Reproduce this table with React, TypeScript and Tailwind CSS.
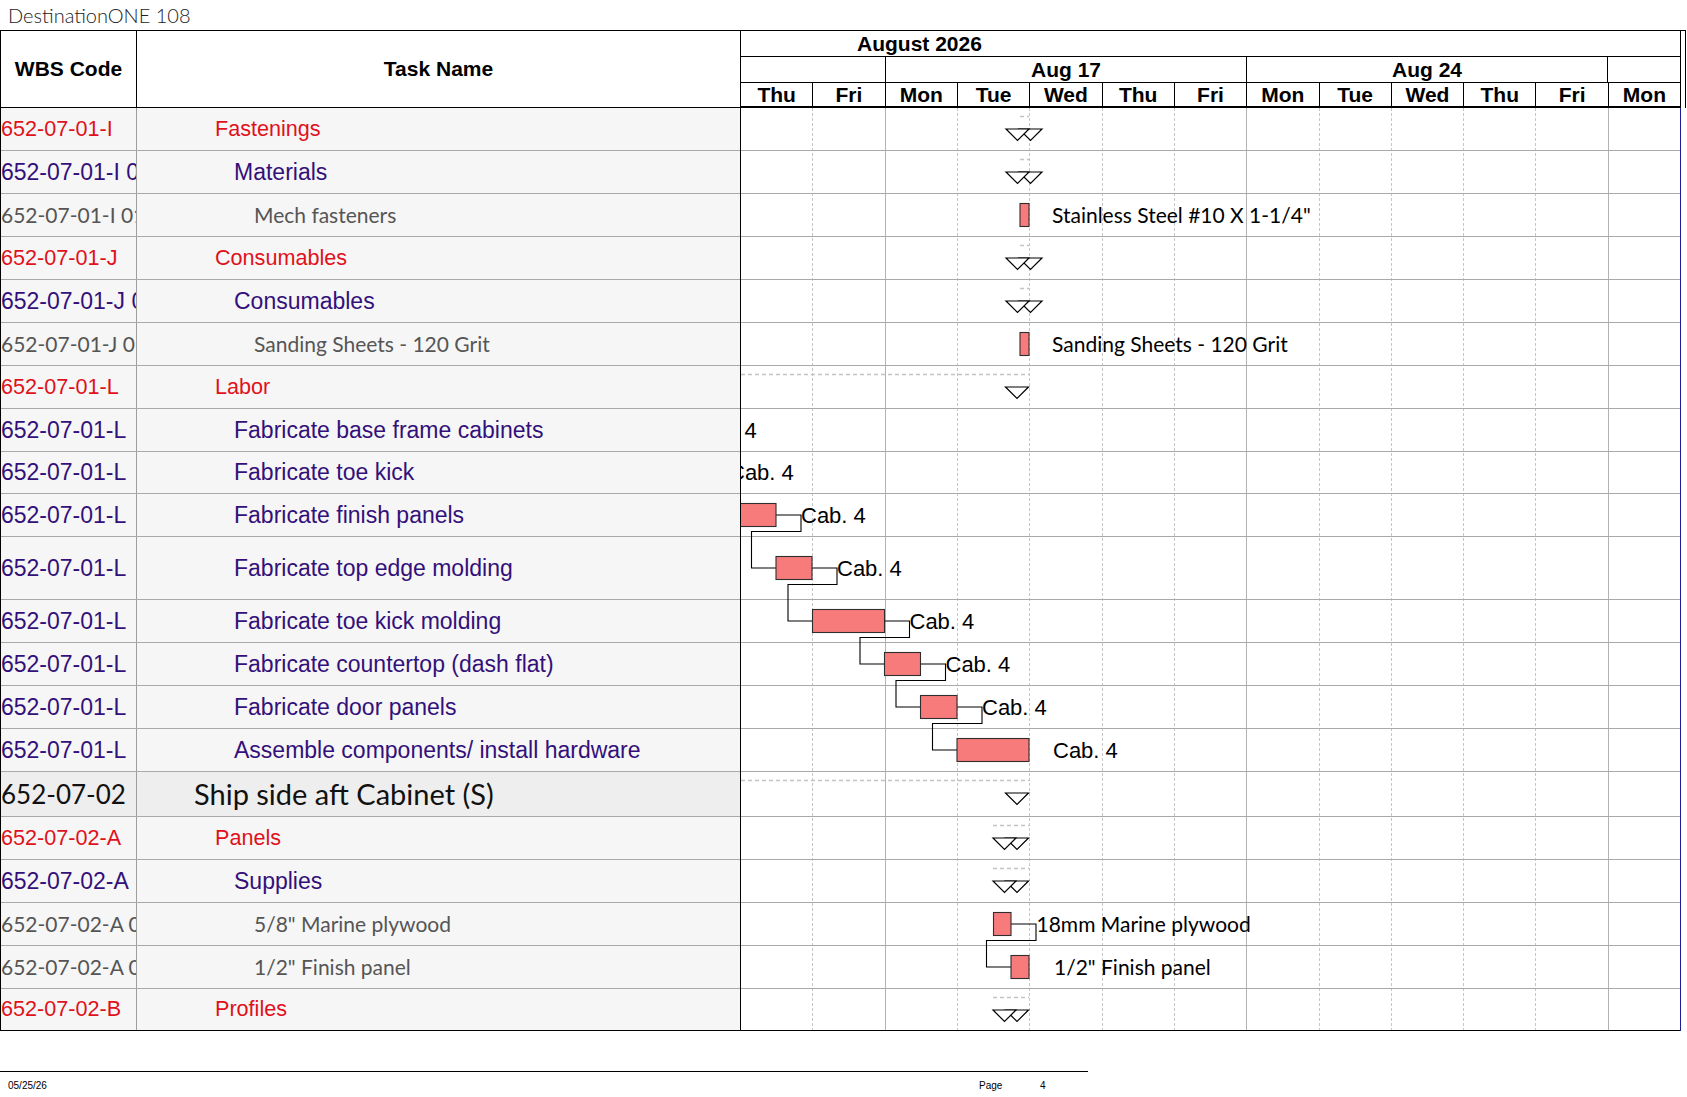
import React from 'react'

type Kind = 'red' | 'purple' | 'gray' | 'top'

type Row = {
  code: string
  name: string
  kind: Kind
  h: number
  label?: { x: number; text: string; cab?: boolean }
}

const rows: Row[] = [
  { code: '652-07-01-I', name: 'Fastenings', kind: 'red', h: 43 },
  { code: '652-07-01-I 01', name: 'Materials', kind: 'purple', h: 43 },
  { code: '652-07-01-I 01 01', name: 'Mech fasteners', kind: 'gray', h: 43, label: { x: 1052, text: 'Stainless Steel #10 X 1-1/4"' } },
  { code: '652-07-01-J', name: 'Consumables', kind: 'red', h: 43 },
  { code: '652-07-01-J 01', name: 'Consumables', kind: 'purple', h: 43 },
  { code: '652-07-01-J 01 01', name: 'Sanding Sheets - 120 Grit', kind: 'gray', h: 43, label: { x: 1052, text: 'Sanding Sheets - 120 Grit' } },
  { code: '652-07-01-L', name: 'Labor', kind: 'red', h: 43 },
  { code: '652-07-01-L', name: 'Fabricate base frame cabinets', kind: 'purple', h: 43, label: { x: 692, text: 'Cab. 4', cab: true } },
  { code: '652-07-01-L', name: 'Fabricate toe kick', kind: 'purple', h: 42, label: { x: 729, text: 'Cab. 4', cab: true } },
  { code: '652-07-01-L', name: 'Fabricate finish panels', kind: 'purple', h: 43, label: { x: 801, text: 'Cab. 4', cab: true } },
  { code: '652-07-01-L', name: 'Fabricate top edge molding', kind: 'purple', h: 63, label: { x: 837, text: 'Cab. 4', cab: true } },
  { code: '652-07-01-L', name: 'Fabricate toe kick molding', kind: 'purple', h: 43, label: { x: 909.5, text: 'Cab. 4', cab: true } },
  { code: '652-07-01-L', name: 'Fabricate countertop (dash flat)', kind: 'purple', h: 43, label: { x: 945.5, text: 'Cab. 4', cab: true } },
  { code: '652-07-01-L', name: 'Fabricate door panels', kind: 'purple', h: 43, label: { x: 982, text: 'Cab. 4', cab: true } },
  { code: '652-07-01-L', name: 'Assemble components/ install hardware', kind: 'purple', h: 43, label: { x: 1053, text: 'Cab. 4', cab: true } },
  { code: '652-07-02', name: 'Ship side aft Cabinet (S)', kind: 'top', h: 45 },
  { code: '652-07-02-A', name: 'Panels', kind: 'red', h: 43 },
  { code: '652-07-02-A', name: 'Supplies', kind: 'purple', h: 43 },
  { code: '652-07-02-A 01 01', name: '5/8" Marine plywood', kind: 'gray', h: 43, label: { x: 1036.5, text: '18mm Marine plywood' } },
  { code: '652-07-02-A 01 02', name: '1/2" Finish panel', kind: 'gray', h: 43, label: { x: 1054, text: '1/2" Finish panel' } },
  { code: '652-07-02-B', name: 'Profiles', kind: 'red', h: 42 },
]

const heights: Record<number, string> = {
  42: 'h-[42px]',
  43: 'h-[43px]',
  45: 'h-[45px]',
  63: 'h-[63px]',
}

const codeStyle: Record<Kind, string> = {
  red: "font-['Liberation_Sans',Arial,sans-serif] text-[21.6px] text-[#e0111b]",
  purple: "font-['Liberation_Sans',Arial,sans-serif] text-[23px] text-[#33107a]",
  gray: "font-['Lato',sans-serif] text-[21px] text-[#555555]",
  top: "font-['Lato',sans-serif] text-[26px] text-[#111111]",
}

const nameStyle: Record<Kind, string> = {
  red: "pl-[78px] font-['Liberation_Sans',Arial,sans-serif] text-[21.6px] text-[#e0111b]",
  purple: "pl-[97px] font-['Liberation_Sans',Arial,sans-serif] text-[23px] text-[#33107a]",
  gray: "pl-[117px] font-['Lato',sans-serif] text-[21px] text-[#555555]",
  top: "pl-[57px] font-['Lato',sans-serif] text-[29px] text-[#111111]",
}

// page y of each row top, body starts under the header at y=108
const tops: number[] = []
rows.forEach((r, i) => tops.push(i === 0 ? 108 : tops[i - 1] + rows[i - 1].h))
const mid = (i: number) => tops[i] + (rows[i].h - 1) / 2

const bars = [
  { row: 2, x1: 1020, x2: 1029 },
  { row: 5, x1: 1020, x2: 1029 },
  { row: 9, x1: 700, x2: 776 },
  { row: 10, x1: 776, x2: 812 },
  { row: 11, x1: 812.5, x2: 884.5 },
  { row: 12, x1: 884.5, x2: 920.5 },
  { row: 13, x1: 920.5, x2: 957 },
  { row: 14, x1: 957, x2: 1029 },
  { row: 18, x1: 993.5, x2: 1011 },
  { row: 19, x1: 1011, x2: 1029 },
]

const summaries = [
  { row: 0, tris: [1030.5, 1017.5], line: [1020, 1029] },
  { row: 1, tris: [1030.5, 1017.5], line: [1020, 1029] },
  { row: 3, tris: [1030.5, 1017.5], line: [1020, 1029] },
  { row: 4, tris: [1030.5, 1017.5], line: [1020, 1029] },
  { row: 6, tris: [1017], line: [741, 1029] },
  { row: 15, tris: [1017], line: [741, 1029] },
  { row: 16, tris: [1017, 1004.5], line: [993, 1029] },
  { row: 17, tris: [1017, 1004.5], line: [993, 1029] },
  { row: 20, tris: [1017, 1004.5], line: [993, 1029] },
]

const links = [
  [9, 10],
  [10, 11],
  [11, 12],
  [12, 13],
  [13, 14],
  [18, 19],
]

const days = ['Thu', 'Fri', 'Mon', 'Tue', 'Wed', 'Thu', 'Fri', 'Mon', 'Tue', 'Wed', 'Thu', 'Fri', 'Mon']

function barOf(row: number) {
  return bars.find((b) => b.row === row)!
}

function GanttDrawing() {
  return (
    <svg
      className="pointer-events-none absolute left-0 top-0"
      width={939}
      height={923}
      viewBox="741 108 939 923"
    >
      {summaries.map((s) => (
        <g key={s.row}>
          <line
            x1={s.line[0]}
            x2={s.line[1]}
            y1={tops[s.row] + 8.5}
            y2={tops[s.row] + 8.5}
            stroke="#c4c4c4"
            strokeWidth={1.5}
            strokeDasharray="4 3"
          />
          {s.tris.map((c) => {
            const t = tops[s.row] + 21
            return (
              <polygon
                key={c}
                points={`${c - 11.5},${t} ${c},${t + 11.5} ${c + 11.5},${t}`}
                fill="#ffffff"
                stroke="#000000"
                strokeWidth={1.2}
              />
            )
          })}
        </g>
      ))}
      {links.map(([a, b]) => {
        const from = barOf(a)
        const to = barOf(b)
        const ya = mid(a)
        const yb = mid(b)
        const d = `M ${from.x2} ${ya} H ${from.x2 + 25} V ${ya + 16.5} H ${to.x1 - 24.5} V ${yb} H ${to.x1}`
        return <path key={a} d={d} fill="none" stroke="#000000" strokeWidth={1.1} />
      })}
      {bars.map((b) => (
        <rect
          key={b.row}
          x={b.x1}
          y={mid(b.row) - 11.5}
          width={b.x2 - b.x1}
          height={23}
          fill="#f87b7b"
          stroke="#2e2e2e"
          strokeWidth={1.1}
        />
      ))}
    </svg>
  )
}

function GanttHeader() {
  return (
    <div className="flex h-[77px]">
      <div className="flex w-[940px] flex-col border-r border-black bg-white font-['Liberation_Sans',Arial,sans-serif] text-[21px] font-bold text-black">
        <div className="flex h-[26px] items-center border-b border-black pl-[116px] leading-none">August 2026</div>
        <div className="flex h-[26px] border-b border-black leading-none">
          <div className="flex-[2] border-r border-black" />
          <div className="flex flex-[5] items-center justify-center border-r border-black">Aug 17</div>
          <div className="flex flex-[5] items-center justify-center border-r border-black">Aug 24</div>
          <div className="flex-[1]" />
        </div>
        <div className="flex h-[25px] border-b-2 border-black leading-none">
          {days.map((d, i) => (
            <div
              key={i}
              className={
                i === days.length - 1
                  ? 'flex flex-1 items-center justify-center'
                  : 'flex flex-1 items-center justify-center border-r border-black'
              }
            >
              {d}
            </div>
          ))}
        </div>
      </div>
      <div className="w-[5px] border-r border-black" />
    </div>
  )
}

function GridLines() {
  return (
    <div className="absolute inset-0 flex">
      {days.map((_, i) => {
        let cls = 'flex-1 border-r border-dashed border-[#c6c6c6]'
        if (i === 1 || i === 6 || i === 11) cls = 'flex-1 border-r border-[#b3b3b3]'
        if (i === days.length - 1) cls = 'flex-1'
        return <div key={i} className={cls} />
      })}
    </div>
  )
}

function GanttBody() {
  return (
    <div className="relative w-[940px] overflow-hidden border-r border-[#1c1c9c] bg-white">
      <GridLines />
      {rows.map((r, i) => (
        <div
          key={i}
          className={`relative ${heights[r.h]} border-b ${i === rows.length - 1 ? 'border-black' : 'border-[#a9a9a9]'}`}
        >
          {r.label && (
            <span
              className={
                r.label.cab
                  ? "absolute inset-y-0 flex items-center whitespace-nowrap font-['Liberation_Sans',Arial,sans-serif] text-[22px] text-black"
                  : "absolute inset-y-0 flex items-center whitespace-nowrap font-['Lato',sans-serif] text-[21px] text-black"
              }
              style={{ left: r.label.x - 741 }}
            >
              {r.label.text}
            </span>
          )}
        </div>
      ))}
      <GanttDrawing />
    </div>
  )
}

function TaskTable() {
  return (
    <div className="flex w-[741px] flex-col border-l border-r border-black">
      <div className="flex h-[77px] border-b border-black bg-white font-['Liberation_Sans',Arial,sans-serif] text-[21px] font-bold text-black">
        <div className="flex w-[136px] items-center justify-center border-r border-black">WBS Code</div>
        <div className="flex flex-1 items-center justify-center">Task Name</div>
      </div>
      {rows.map((r, i) => (
        <div
          key={i}
          className={`flex ${heights[r.h]} border-b ${i === rows.length - 1 ? 'border-black' : 'border-[#a9a9a9]'} ${
            r.kind === 'top' ? 'bg-[#eeeeee]' : 'bg-[#f6f6f6]'
          }`}
        >
          <div className={`flex w-[136px] items-center overflow-hidden whitespace-nowrap border-r border-[#9d9d9d] ${codeStyle[r.kind]}`}>
            {r.code}
          </div>
          <div className={`flex flex-1 items-center overflow-hidden whitespace-nowrap ${nameStyle[r.kind]}`}>
            {r.name}
          </div>
        </div>
      ))}
    </div>
  )
}

export default function App() {
  return (
    <div className="h-[1097px] w-[1687px] overflow-hidden bg-white">
      <div className="flex h-[30px] items-center pl-[8px] font-['Lato',sans-serif] text-[20px] font-light text-[#222222]">
        DestinationONE 108
      </div>
      <div className="flex w-[1686px] border-t border-black">
        <TaskTable />
        <div className="flex flex-col">
          <GanttHeader />
          <GanttBody />
        </div>
      </div>
      <div className="mt-[40px] flex h-[27px] w-[1088px] items-center border-t border-black font-['Liberation_Sans',Arial,sans-serif] text-[10px] text-black">
        <span className="w-[979px] pl-[8px]">05/25/26</span>
        <span className="w-[61px]">Page</span>
        <span>4</span>
      </div>
    </div>
  )
}
